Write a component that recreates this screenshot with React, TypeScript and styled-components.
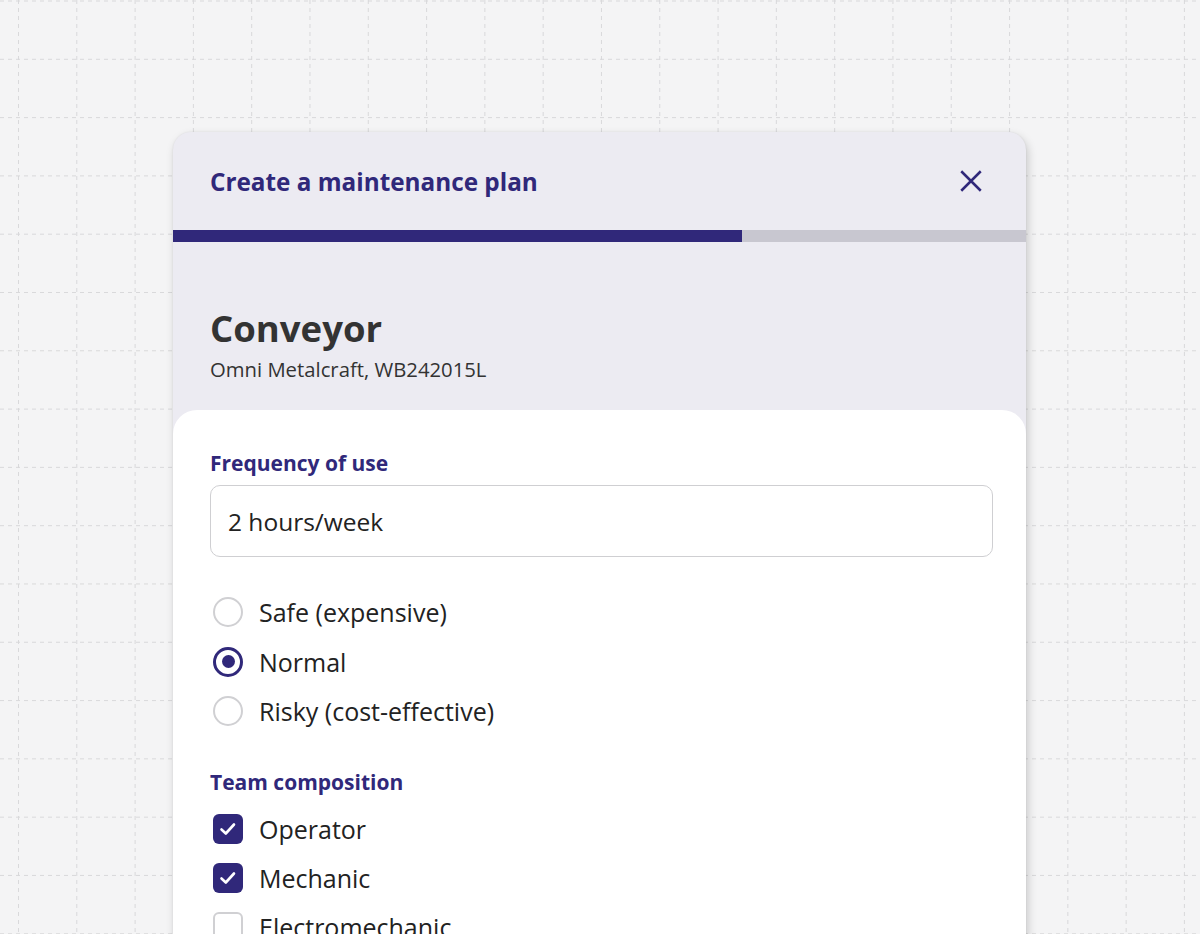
import React from 'react';
import styled, { createGlobalStyle } from 'styled-components';

const purple = '#30287a';
const lineColor = '#d8d8da';

const GlobalStyle = createGlobalStyle`
  html, body {
    margin: 0;
    height: 100%;
  }

  body {
    font-family: 'Open Sans', 'Noto Sans', sans-serif;
    background: #f4f4f5;
    overflow: hidden;
  }
`;

const GridCanvas = styled.div`
  position: relative;
  width: 1200px;
  height: 934px;
  overflow: hidden;
  background: #f4f4f5;

  /* dashed vertical lines */
  &::before {
    content: '';
    position: absolute;
    inset: 0;
    background-image: linear-gradient(to right, ${lineColor} 1px, transparent 1px);
    background-size: 58.3px 100%;
    background-position: 18px 0;
    -webkit-mask-image: repeating-linear-gradient(to bottom, #000 0 4px, transparent 4px 8px);
    mask-image: repeating-linear-gradient(to bottom, #000 0 4px, transparent 4px 8px);
  }

  /* dashed horizontal lines */
  &::after {
    content: '';
    position: absolute;
    inset: 0;
    background-image: linear-gradient(to bottom, ${lineColor} 1px, transparent 1px);
    background-size: 100% 58.3px;
    background-position: 0 0.5px;
    -webkit-mask-image: repeating-linear-gradient(to right, #000 0 4px, transparent 4px 8px);
    mask-image: repeating-linear-gradient(to right, #000 0 4px, transparent 4px 8px);
  }
`;

const Stage = styled.div`
  position: relative;
  z-index: 1;
  display: flex;
  padding: 132px 0 0 173px;
`;

const Card = styled.div`
  width: 853px;
  height: 900px;
  background: #ecebf2;
  border-radius: 18px 18px 0 0;
  box-shadow: 2px 4px 10px rgba(0, 0, 0, 0.18), 0 0 2px rgba(0, 0, 0, 0.08);
  display: flex;
  flex-direction: column;
  overflow: hidden;
`;

const Header = styled.div`
  height: 98px;
  display: flex;
  align-items: center;
  justify-content: space-between;
  padding: 0 42px 0 37px;
`;

const Title = styled.h1`
  margin: 0;
  font-size: 24.3px;
  font-weight: 700;
  color: ${purple};
`;

const CloseButton = styled.button`
  border: none;
  background: none;
  padding: 0;
  display: flex;
  color: ${purple};
  cursor: pointer;
`;

const Progress = styled.div`
  height: 12px;
  background: #c8c7d0;
`;

const ProgressFill = styled.div`
  height: 100%;
  background: ${purple};
`;

const Machine = styled.div`
  height: 168px;
  box-sizing: border-box;
  padding: 64px 37px 0;
`;

const MachineName = styled.h2`
  margin: 0;
  font-size: 36.5px;
  line-height: 44px;
  font-weight: 700;
  color: #333333;
`;

const MachineMeta = styled.p`
  margin: 6px 0 0;
  font-size: 20.3px;
  line-height: 26px;
  color: #333333;
`;

const Body = styled.div`
  flex: 1;
  background: #ffffff;
  border-radius: 24px 24px 0 0;
  padding: 40px 33px 0 37px;
  display: flex;
  flex-direction: column;
`;

const FieldLabel = styled.div<{ $top?: number }>`
  margin-top: ${(p) => p.$top ?? 0}px;
  font-size: 21px;
  line-height: 26px;
  font-weight: 700;
  color: ${purple};
`;

const TextInput = styled.div`
  margin-top: 9px;
  height: 72px;
  box-sizing: border-box;
  border: 1.5px solid #cfcfd2;
  border-radius: 10px;
  display: flex;
  align-items: center;
  padding: 0 17px;
  font-size: 24.5px;
  color: #222222;
`;

const OptionList = styled.div<{ $top: number; $gap: number }>`
  margin-top: ${(p) => p.$top}px;
  display: flex;
  flex-direction: column;
  gap: ${(p) => p.$gap}px;
`;

const Option = styled.label`
  display: flex;
  align-items: center;
  gap: 16px;
  height: 30px;
  font-size: 25px;
  color: #222222;
`;

const RadioMark = styled.span<{ $checked?: boolean }>`
  width: 30px;
  height: 30px;
  box-sizing: border-box;
  border-radius: 50%;
  border: ${(p) => (p.$checked ? `3px solid ${purple}` : '2.5px solid #d0d0d3')};
  display: flex;
  align-items: center;
  justify-content: center;
  margin-left: 3px;

  &::after {
    content: '';
    display: ${(p) => (p.$checked ? 'block' : 'none')};
    width: 13px;
    height: 13px;
    border-radius: 50%;
    background: ${purple};
  }
`;

const CheckMark = styled.span<{ $checked?: boolean }>`
  width: 30px;
  height: 30px;
  box-sizing: border-box;
  border-radius: 6px;
  margin-left: 3px;
  background: ${(p) => (p.$checked ? purple : '#ffffff')};
  border: ${(p) => (p.$checked ? 'none' : '2.5px solid #d0d0d3')};
  display: flex;
  align-items: center;
  justify-content: center;
`;

const CloseIcon = () => (
  <svg width="26" height="26" viewBox="0 0 24 24" fill="none" stroke="currentColor" strokeWidth="2.3">
    <path d="M3 3 L21 21 M21 3 L3 21" />
  </svg>
);

const Tick = () => (
  <svg width="20" height="20" viewBox="0 0 20 20" fill="none" stroke="#ffffff" strokeWidth="2.6" strokeLinecap="round" strokeLinejoin="round">
    <path d="M3.5 10.5 L7.8 14.5 L16 5.5" />
  </svg>
);

const levels = [
  { label: 'Safe (expensive)', checked: false },
  { label: 'Normal', checked: true },
  { label: 'Risky (cost-effective)', checked: false },
];

const roles = [
  { label: 'Operator', checked: true },
  { label: 'Mechanic', checked: true },
  { label: 'Electromechanic', checked: false },
];

const App: React.FC = () => (
  <>
    <GlobalStyle />
    <GridCanvas>
      <Stage>
        <Card>
          <Header>
            <Title>Create a maintenance plan</Title>
            <CloseButton aria-label="Close">
              <CloseIcon />
            </CloseButton>
          </Header>
          <Progress>
            <ProgressFill style={{ width: `${(569 / 853) * 100}%` }} />
          </Progress>
          <Machine>
            <MachineName>Conveyor</MachineName>
            <MachineMeta>Omni Metalcraft, WB242015L</MachineMeta>
          </Machine>
          <Body>
            <FieldLabel>Frequency of use</FieldLabel>
            <TextInput>2 hours/week</TextInput>
            <OptionList $top={40} $gap={19.5}>
              {levels.map((l) => (
                <Option key={l.label}>
                  <RadioMark $checked={l.checked} />
                  {l.label}
                </Option>
              ))}
            </OptionList>
            <FieldLabel $top={43}>Team composition</FieldLabel>
            <OptionList $top={19} $gap={19}>
              {roles.map((r) => (
                <Option key={r.label}>
                  <CheckMark $checked={r.checked}>{r.checked && <Tick />}</CheckMark>
                  {r.label}
                </Option>
              ))}
            </OptionList>
          </Body>
        </Card>
      </Stage>
    </GridCanvas>
  </>
);

export default App;
